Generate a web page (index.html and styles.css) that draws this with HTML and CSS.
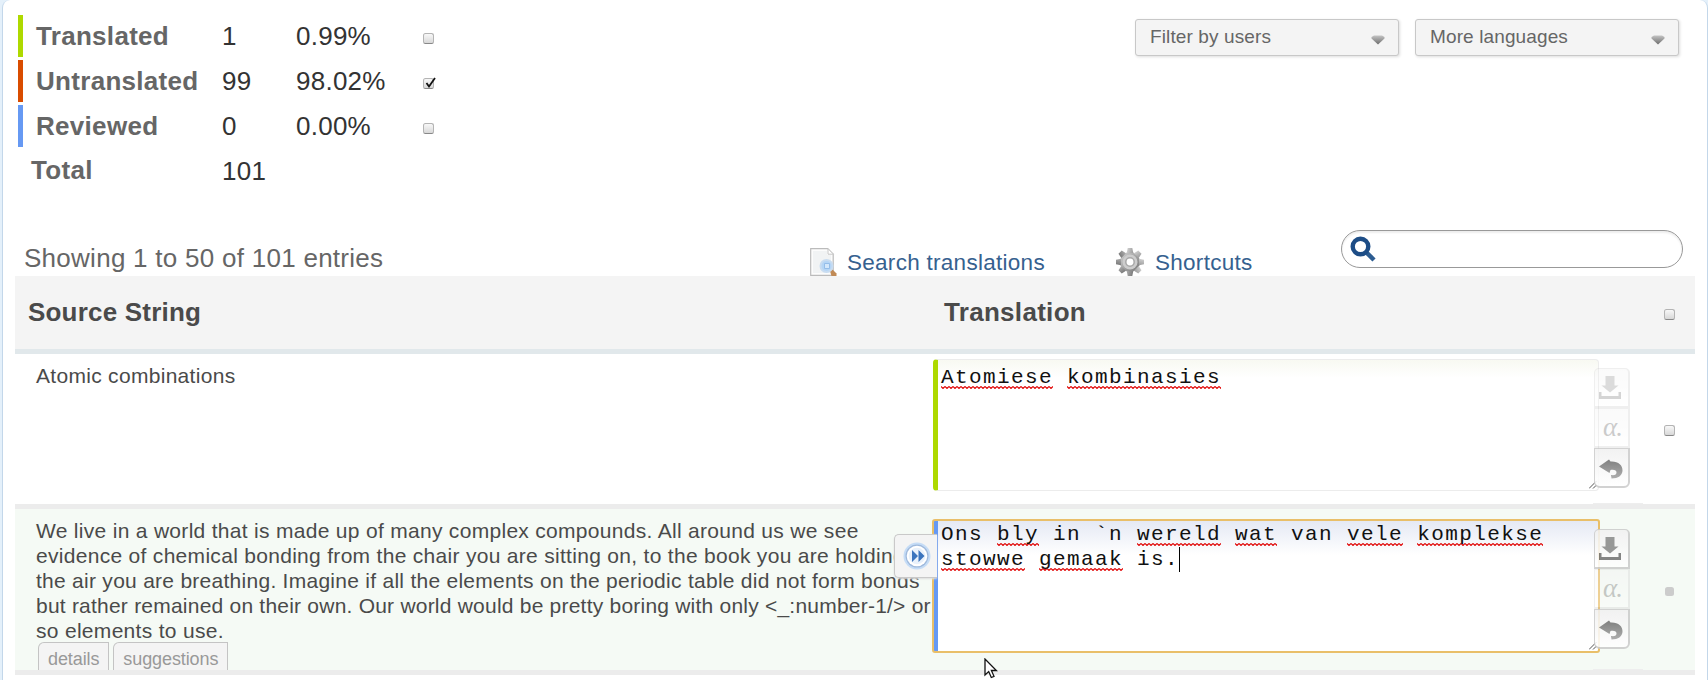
FILE: index.html
```html
<!DOCTYPE html>
<html lang="en">
<head>
<meta charset="utf-8">
<title>Translation editor</title>
<link rel="stylesheet" href="styles.css">
</head>
<body>
<svg class="defs" width="0" height="0" aria-hidden="true">
  <defs>
    <linearGradient id="down" x1="0" y1="0" x2="0" y2="1"><stop offset="0" stop-color="#c4c4c4"/><stop offset="1" stop-color="#6c6c6c"/></linearGradient>
    <linearGradient id="metal" x1="0" y1="0" x2="1" y2="1"><stop offset="0" stop-color="#d4d4d4"/><stop offset="1" stop-color="#747474"/></linearGradient>
    <linearGradient id="undo" x1="0" y1="0" x2="0" y2="1"><stop offset="0" stop-color="#6f6f6f"/><stop offset="1" stop-color="#a4a4a4"/></linearGradient>
    <symbol id="i-save" viewBox="0 0 36 40"><path d="M12.500 8h9v9.500h4L17 24.500l-8.500-7h4z" fill="#8b8b8b"/><path d="M6 24h2.500v4h17v-4H28v7H6z" fill="#747474"/></symbol>
    <symbol id="i-undo" viewBox="0 0 36 40"><path d="M6 18.500L16 11.500l1.500 2C25 13 30 17 29.500 23c-.5 4.500-4 7.500-11 7.500l-.5-3.500c4 .5 5.500-.5 5.500-2.500 0-2.200-2-3-6-2.500l-1 3z" fill="url(#undo)"/></symbol>
  </defs>
</svg>
<main class="panel">
  <header class="top">
    <div class="stats">
      <div class="stat stat-translated"><b class="label">Translated</b><span class="count">1</span><span class="percent">0.99%</span><i class="check"></i></div>
      <div class="stat stat-untranslated"><b class="label">Untranslated</b><span class="count">99</span><span class="percent">98.02%</span><i class="check"><svg class="tick" viewBox="0 0 13 12"><path d="M2.500 6l2.500 3.500L11 1" fill="none" stroke="#111" stroke-width="1.800"/></svg></i></div>
      <div class="stat stat-reviewed"><b class="label">Reviewed</b><span class="count">0</span><span class="percent">0.00%</span><i class="check"></i></div>
      <div class="stat stat-total"><b class="label">Total</b><span class="count">101</span></div>
    </div>
    <div class="filters">
      <div class="select"><span>Filter by users</span><svg width="14" height="10" viewBox="0 0 14 10"><path d="M.5 2L3 .5h8L13.500 2v1.500L7 9.500.5 3.500z" fill="url(#down)"/></svg></div>
      <div class="select"><span>More languages</span><svg width="14" height="10" viewBox="0 0 14 10"><path d="M.5 2L3 .5h8L13.500 2v1.500L7 9.500.5 3.500z" fill="url(#down)"/></svg></div>
    </div>
  </header>

  <div class="toolbar">
    <div class="info">Showing 1 to 50 of 101 entries</div>
    <a class="link link-search"><svg width="28" height="28" viewBox="0 0 28 28"><path d="M.7.700h17l5.500 5.500V27.300H.7z" fill="#fcfcfc" stroke="#bbb" stroke-width="1.200"/><path d="M3 3h14v4h4v18H3z" fill="#f1f3f4"/><path d="M18 .7v5.500h5.500z" fill="#fff" stroke="#c6c6c6"/><path d="M20 23l2.500-1.500 4 4V28h-5z" fill="#c18a55"/><circle cx="16.500" cy="18" r="6" fill="#b4d5f6" stroke="#c8dcf1" stroke-width="2"/><path d="M14.500 15.500h5v5h-5z" fill="#d3e7fb" stroke="#94bde9"/></svg><span>Search translations</span></a>
    <a class="link link-shortcuts"><svg width="28" height="28" viewBox="-14 -14 28 28"><g fill="url(#metal)"><circle r="10"/><path id="tooth" d="M-2.300-14h4.600l1 5h-6.600zM-2.300 14h4.600l1-5h-6.600z"/><use href="#tooth" transform="rotate(45)"/><use href="#tooth" transform="rotate(90)"/><use href="#tooth" transform="rotate(135)"/></g><circle r="7.500" fill="#cdcdcd"/><circle r="4.200" fill="#fff" stroke="#a8a8a8" stroke-width="1.500"/></svg><span>Shortcuts</span></a>
    <div class="search"><svg width="26" height="26" viewBox="0 0 26 26"><path d="M16 16l8 8" stroke="#2c5c91" stroke-width="4.500"/><circle cx="10.500" cy="10.500" r="7.800" fill="#fff" stroke="#1d4d86" stroke-width="4.400"/></svg></div>
  </div>

  <section class="table">
    <div class="row head"><div class="source">Source String</div><div class="target">Translation</div><div class="pick"><i class="check"></i></div></div>
    <div class="row first">
      <div class="source">Atomic combinations</div>
      <div class="target">
        <div class="editor editor-translated"><span class="typo">Atomiese</span> <span class="typo">kombinasies</span><svg class="grip" viewBox="0 0 8 8"><path d="M0 7.500L7.500 0M4 7.500L7.500 4" stroke="#555"/></svg></div>
        <div class="tools"><div class="tool off"><svg><use href="#i-save"/></svg></div><div class="tool off alpha">α.</div><div class="tool"><svg><use href="#i-undo"/></svg></div></div>
      </div>
      <div class="pick"><i class="check"></i></div>
    </div>
    <div class="row active">
      <div class="source">We live in a world that is made up of many complex compounds. All around us we see<br>evidence of chemical bonding from the chair you are sitting on, to the book you are holding,<br><span class="snug">the air you are breathing. Imagine if all the elements on the periodic table did not form bonds</span><br><span class="tight">but rather remained on their own. Our world would be pretty boring with only &lt;_:number-1/&gt; or</span><br>so elements to use.
        <div class="tabs"><span class="tab">details</span><span class="tab">suggestions</span></div>
      </div>
      <div class="target">
        <div class="editor editor-focus">Ons <span class="typo">bly</span> in `n <span class="typo">wereld</span> <span class="typo">wat</span> van <span class="typo">vele</span> <span class="typo">komplekse</span><br><span class="typo">stowwe</span> <span class="typo">gemaak</span> is.<i class="caret"></i><svg class="grip" viewBox="0 0 8 8"><path d="M0 7.500L7.500 0M4 7.500L7.500 4" stroke="#555"/></svg></div>
        <div class="copy"><svg width="28" height="28" viewBox="-14 -14 28 28"><circle r="13.500" fill="#c5dcf6"/><circle r="11.500" fill="#9fb9dc"/><circle r="10.300" fill="#fff"/><circle r="8.300" fill="#e9f1fb"/><path d="M-5-6L1 0-5 6zM1.500-6L7.500 0l-6 6z" fill="#3b74bd"/></svg></div>
        <div class="tools"><div class="tool"><svg><use href="#i-save"/></svg></div><div class="tool off alpha">α.</div><div class="tool"><svg><use href="#i-undo"/></svg></div></div>
      </div>
      <div class="pick"><i class="check disabled"></i></div>
    </div>
  </section>
</main>
<svg class="pointer" width="14" height="22" viewBox="0 0 14 22"><path d="M1 1v16l3.700-3.500 2.600 6 2.700-1.200-2.600-5.800h5z" fill="#fff" stroke="#111" stroke-width="1.300"/></svg>
</body>
</html>
```
FILE: styles.css
```css
* { box-sizing: border-box; }
body {
  margin: 0;
  height: 680px;
  overflow: hidden;
  background: #e4f0fa;
  font-family: "Liberation Sans", Arial, sans-serif;
  font-size: 21px;
  letter-spacing: .3px;
  color: #4a4a4a;
}
svg { display: block; flex: none; }
.defs { position: absolute; }
.panel {
  margin-left: 2px;
  height: 690px;
  padding: 15px 12px 0;
  background: #fff;
  border: 1px solid #c3d7ea;
  border-top: 0;
  border-radius: 8px 8px 0 0;
}

/* statistics and filters */
.top { display: flex; justify-content: space-between; height: 215px; padding-left: 3px; }
.stats { font-size: 26px; line-height: 42px; }
.stat { display: grid; grid-template-columns: 186px 74px 127px 11px; height: 42px; margin-bottom: 3px; border-left: 5px solid; padding-left: 13px; }
.stat-translated { border-color: #aed900; }
.stat-untranslated { border-color: #d94c00; }
.stat-reviewed { border-color: #6699f3; }
.stat-total { border-color: transparent; padding-left: 8px; grid-template-columns: 191px 74px; }
.stat-total .label { line-height: 40px; }
.label { color: #666; }
.count, .percent { color: #333; letter-spacing: .25px; }
.check {
  position: relative;
  display: block;
  width: 11px;
  height: 11px;
  border: 1px solid #b4b4b4;
  border-bottom-color: #888;
  border-radius: 2.500px;
  background: linear-gradient(#f8f8f8, #d8d8d8);
}
.stat .check { margin-top: 18px; }
.tick { position: absolute; left: 0; top: -2px; width: 13px; height: 12px; }
.disabled { width: 9px; height: 9px; border: 0; background: #ccc; }
.filters { display: flex; gap: 16px; padding: 4px 16px 0 0; }
.select {
  display: flex;
  align-items: center;
  justify-content: space-between;
  width: 264px;
  height: 37px;
  padding: 0 13px 2px 14px;
  border: 1px solid #c8c8c8;
  border-radius: 3px;
  background: #f4f4f4;
  box-shadow: 1px 1px 3px #ddd;
  color: #666;
  font-size: 19px;
  letter-spacing: .12px;
}
.select svg { margin-top: 6px; }

/* toolbar */
.toolbar { display: flex; height: 46px; padding-left: 9px; }
.info { width: 786px; font-size: 26px; letter-spacing: .27px; line-height: 56px; color: #666; }
.link { display: flex; gap: 9px; color: #36618f; font-size: 22.5px; letter-spacing: .28px; line-height: 30px; margin-top: 18px; height: 28px; }
.link-search { width: 306px; }
.link-shortcuts { width: 225px; gap: 11px; }
.search { width: 342px; height: 38px; border: 1px solid #999; border-radius: 19px; padding: 5px 8px; box-shadow: inset 0 2px 2px #eee; }

/* table */
.row { display: grid; grid-template-columns: 917px 732px 31px; position: relative; border-bottom: 5px solid #ececec; }
.head { height: 78px; background: #f4f4f4; border-color: #e1e8eb; font-size: 26px; font-weight: bold; }
.head .source, .head .target { line-height: 73px; }
.head .source { padding-left: 13px; letter-spacing: .2px; }
.head .target { padding-left: 12px; }
.pick { display: flex; align-items: center; }
.head .pick { padding-top: 4px; }
.first { height: 155px; }
.first .pick { padding-top: 2px; }
.active .pick { padding: 4px 0 0 1px; }
.first::after, .active::after { content: ""; position: absolute; left: 1578px; bottom: 0; width: 50px; height: 1px; background: #eee; }
.active { height: 166px; background: #f5faf5; }
.source { white-space: nowrap; line-height: 25px; }
.first .source, .active .source { padding: 9px 0 0 21px; }
.snug { letter-spacing: .27px; }
.tight { letter-spacing: .22px; }
.target { position: relative; display: flex; }
.editor {
  position: relative;
  width: 666px;
  font-family: "Liberation Mono", "Courier New", monospace;
  font-size: 21px;
  letter-spacing: 1.4px;
  line-height: 25px;
  color: #111;
  white-space: nowrap;
}
.editor-translated {
  height: 132px;
  margin: 5px 0 0 1px;
  padding: 5px 3px;
  border: 1px solid #ececec;
  border-left: 5px solid #aed900;
  border-radius: 4px;
  background: linear-gradient(#f8f9f2, #fff 18px);
}
.editor-focus {
  width: 668px;
  height: 134px;
  margin-top: 10px;
  padding: 1px 2px 0 7px;
  border: 2px solid #e9bf69;
  border-radius: 3px;
  background: linear-gradient(90deg, #6699f3 4px, transparent 4px), linear-gradient(#e5e9f4, #fff 34px);
}
.typo {
  background: url("data:image/svg+xml,%3Csvg xmlns='http://www.w3.org/2000/svg' width='4' height='3'%3E%3Cpath d='M0 .5L2 2.500 4 .5' fill='none' stroke='%23e00000' stroke-width='1.100'/%3E%3C/svg%3E") left bottom repeat-x;
}
.caret { display: inline-block; width: 1px; height: 25px; margin-bottom: -1px; background: #000; vertical-align: -6px; margin-top: -2px; }
.grip { position: absolute; right: 1px; bottom: 1px; width: 8px; height: 8px; }
.tools { position: absolute; left: 662px; top: 14px; width: 36px; }
.active .tools { top: 20px; }
.tool {
  height: 40px;
  border: 1px solid #ccc;
  border-right-width: 2px;
  border-bottom-width: 2px;
  background: linear-gradient(#f1f1f1, #fff);
  opacity: .88;
}
.tool:first-child { border-radius: 5px 5px 0 0; }
.tool:last-child { border-radius: 0 0 6px 6px; }
.tool svg { width: 36px; height: 40px; margin: -1px -1px -1px -2px; }
.off { opacity: .3; }
.alpha { padding-left: 2px; font: italic 27px/37px "Liberation Serif", serif; letter-spacing: -1px; text-align: center; color: #555; }
.copy {
  position: absolute;
  left: -38px;
  top: 25px;
  width: 43px;
  height: 44px;
  padding: 7px 7px 7px 8px;
  border: 1px solid #c9c9c9;
  border-right: 0;
  border-radius: 5px 0 0 5px;
  background: #f4f4f4;
  box-shadow: 0 1px 2px #ddd;
}
.tabs { display: flex; gap: 4px; margin: -1px 0 0 2px; }
.tab {
  height: 28px;
  padding: 0 9px;
  border: 1px solid #c4c4c4;
  border-bottom: 0;
  border-radius: 6px 0 0;
  background: #f4f4f4;
  color: #999;
  font-size: 18px;
  letter-spacing: -.1px;
  line-height: 32px;
}
.pointer { position: absolute; left: 984px; top: 658px; }
```
